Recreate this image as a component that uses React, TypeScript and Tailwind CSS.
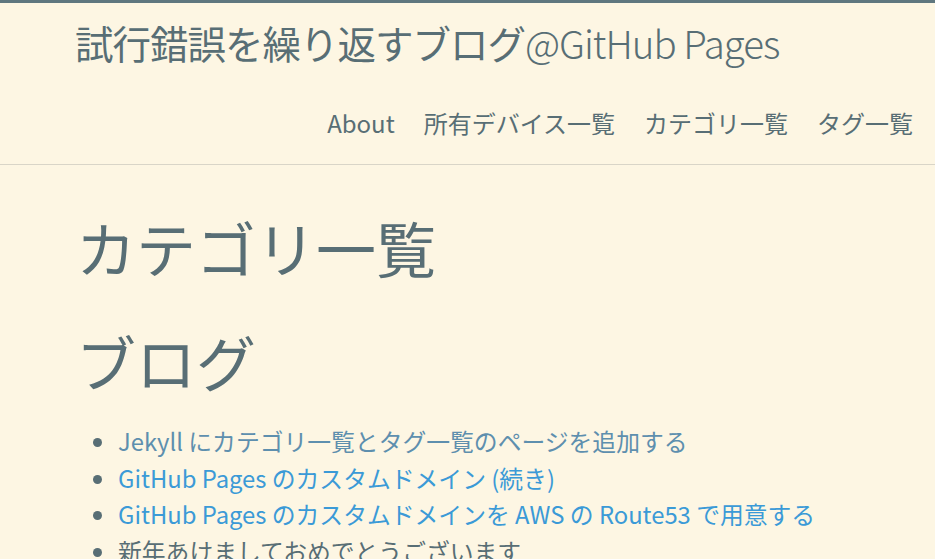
const posts = [
  { title: "Jekyll にカテゴリ一覧とタグ一覧のページを追加する", visited: true },
  { title: "GitHub Pages のカスタムドメイン (続き)", visited: false },
  { title: "GitHub Pages のカスタムドメインを AWS の Route53 で用意する", visited: false },
  { title: "新年あけましておめでとうございます", visited: false, plain: true },
];

const navItems = ["About", "所有デバイス一覧", "カテゴリ一覧", "タグ一覧"];

export default function App() {
  return (
    <div
      className="min-h-[559px] bg-[#fdf6e3] text-[#586e75]"
      style={{ fontFamily: '"Noto Sans CJK JP", "Noto Sans", sans-serif' }}
    >
      <header className="border-t-[3px] border-b border-t-[#5f777f] border-b-[#d9d5c8]">
        <div className="pl-[75px] pr-[22px]">
          <a className="block pt-[14px] text-[38.5px] leading-[50px] tracking-[-1px] text-[#586e75]">
            試行錯誤を繰り返すブログ<span className="font-light">@GitHub Pages</span>
          </a>
          <nav className="flex justify-end gap-[29px] pt-[41px] pb-[26px] text-[24px] leading-[30px]">
            {navItems.map((item) => (
              <a key={item} className="text-[#586e75]">
                {item}
              </a>
            ))}
          </nav>
        </div>
      </header>
      <main className="pl-[76px] pt-[46px]">
        <h1 className="text-[60px] leading-[72px]">カテゴリ一覧</h1>
        <h2 className="mt-[42px] text-[60px] leading-[72px]">ブログ</h2>
        <ul className="mt-[26px] list-disc pl-[42px] text-[23.8px] leading-[36.5px] marker:text-[#586e75]">
          {posts.map((p) => (
            <li key={p.title}>
              <a
                className={
                  p.plain
                    ? "text-[#586e75]"
                    : p.visited
                      ? "text-[#5e8fae]"
                      : "text-[#3b9ad7]"
                }
              >
                {p.title}
              </a>
            </li>
          ))}
        </ul>
      </main>
    </div>
  );
}
